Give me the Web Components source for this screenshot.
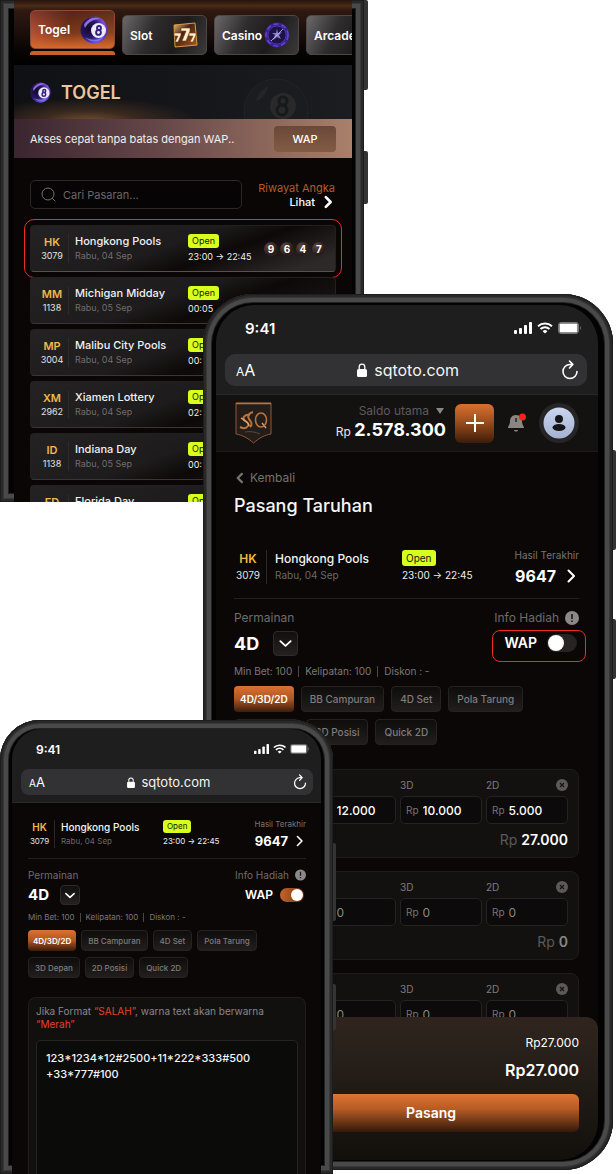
<!DOCTYPE html>
<html lang="id">
<head>
<meta charset="utf-8">
<meta name="viewport" content="width=device-width, initial-scale=1">
<title>SQTOTO - WAP</title>
<style>
  body { margin: 0; background: #fff; font-family: Inter, "Liberation Sans", sans-serif; }
</style>
</head>
<body>
<showcase-page></showcase-page>

<script>
// ---------- helpers ----------
function define(name, css, html) {
  customElements.define(name, class extends HTMLElement {
    constructor() {
      super();
      this.attachShadow({ mode: "open" });
    }
    connectedCallback() {
      const body = typeof html === "function" ? html(this) : html;
      this.shadowRoot.innerHTML = `
        <style>
          * { box-sizing: border-box; }
          button, input, select, textarea { font: inherit; color: inherit; margin: 0; }
          button { cursor: pointer; }
          svg { display: block; flex: none; }
          ${css}
        </style>
        ${body}`;
    }
  });
}

const attr = (el, name) => el.getAttribute(name) || "";

// ---------- icons ----------
const ball = size => `
  <svg width="${size}" height="${size}" viewBox="0 0 28 28" aria-hidden="true">
    <defs>
      <radialGradient id="b" cx=".3" cy=".45" r=".75">
        <stop offset="0" stop-color="#120a2c"/><stop offset=".45" stop-color="#2a1767"/>
        <stop offset=".8" stop-color="#7a52e0"/><stop offset="1" stop-color="#3c1f9c"/>
      </radialGradient>
    </defs>
    <circle cx="14" cy="14" r="13.500" fill="url(#b)"/>
    <path d="M4 9C7 3 14 0 20 3 14 3 8 6 5 12z" fill="#b58cff" opacity=".75"/>
    <path d="M5 21c5 6 14 6 18 0-4 3-12 4-18 0z" fill="#6d86ff" opacity=".8"/>
    <circle cx="18.500" cy="14.500" r="7.500" fill="#eeeaf8"/>
    <g fill="none" stroke="#33207c" stroke-width="1.900"><circle cx="19" cy="12" r="2"/><circle cx="18.500" cy="16.500" r="2.400"/></g>
  </svg>`;

const slots = `
  <svg width="26" height="26" viewBox="0 0 26 26" aria-hidden="true">
    <defs><linearGradient id="s" x2="1" y2="1"><stop offset="0" stop-color="#e9b976"/><stop offset=".4" stop-color="#4a2413"/><stop offset="1" stop-color="#a9591c"/></linearGradient></defs>
    <path d="M2 3 23 1 25 23 3 25z" fill="url(#s)" stroke="#d99a45"/>
    <g fill="#fff0d2" stroke="#7a3a10" stroke-width=".6">
      <path d="M2 11h7v2l-3 7H3l3-6H2zM17 11h7v2l-3 7h-3l3-6h-4z"/>
      <path d="M9 6h9v3l-4 10h-4l4-10H9z"/>
    </g>
  </svg>`;

const chip = `
  <svg width="26" height="26" viewBox="0 0 26 26" aria-hidden="true">
    <circle cx="13" cy="13" r="12.500" fill="#3a2190"/>
    <circle cx="13" cy="13" r="11" fill="none" stroke="#6246c8" stroke-width="1.500" stroke-dasharray="5 3"/>
    <circle cx="13" cy="13" r="9" fill="#1c1445" stroke="#4c34ac"/>
    <path d="M13 7l1 4 4-1-3 3 2 4-4-2-4 3 2-5-3-2h4z" fill="#8e7ccd"/>
    <path d="M7 19 19 7" stroke="#c7bdf3" stroke-width=".8"/>
  </svg>`;

const chevron = (size, d, w = 2) => `
  <svg width="${size}" height="${size}" viewBox="0 0 16 16" fill="none" stroke="currentColor" stroke-width="${w}" stroke-linecap="round" stroke-linejoin="round" aria-hidden="true"><path d="${d}"/></svg>`;
const RIGHT = "M5.500 2.500 11 8l-5.500 5.500";
const LEFT = "M10.500 2.500 5 8l5.500 5.500";
const DOWN = "M2.500 5.500 8 10.500l5.500-5";

const TABS = { togel: ball(28), slot: slots, casino: chip };

// ---------- device ----------
define("phone-frame", `
  :host { display: block; position: relative; min-width: 0; min-height: 0; }
  .case {
    height: 100%; display: flex; padding: var(--case-pad, 11px 15px 10px 13px);
    border-radius: var(--case-radius, 50px); background: #030303;
    box-shadow: inset 0 0 0 1px #1d1d1d, inset 0 0 0 3px #292929, inset 0 0 0 4px #393838,
      inset 0 0 0 8px #4a4949, inset 0 0 0 9px #222;
  }
  .screen {
    flex: 1; min-width: 0; display: flex; flex-direction: column; overflow: hidden;
    border-radius: var(--screen-radius, 38px); background: #0b0706; color: #fff;
  }
  .key { position: absolute; left: 100%; width: var(--key-width, 3px); background: #343434; border-radius: 0 2px 2px 0; }
  .one { top: var(--key-one); height: var(--key-one-size); }
  .two { top: var(--key-two); height: var(--key-two-size); }
`, `
  <span class="key one"></span><span class="key two"></span>
  <div class="case"><div class="screen"><slot></slot></div></div>
`);

define("browser-chrome", `
  :host { display: block; flex: none; background: #1f1e1f; border-bottom: 1px solid #2a2829; padding: 13px 11px 8px 9px; }
  .status { display: flex; align-items: center; justify-content: space-between; height: 20px; padding: 0 6px 0 20px; font-size: 15px; font-weight: 600; }
  .signals { display: flex; align-items: center; gap: 5px; }
  .address { display: flex; align-items: center; gap: 8px; height: 32px; margin-top: 16px; padding: 0 8px 0 11px; border-radius: 10px; background: #323133; font-size: 16px; }
  .aa { font-size: 16px; } .aa small { font-size: 12px; }
  .url { flex: 1; display: flex; align-items: center; justify-content: center; gap: 7px; color: #f4f4f4; }
  button { border: 0; padding: 0; background: none; color: #fff; }
  .reload svg { width: 18px; height: 20px; }
  :host([compact]) { padding: 12px 8px 7px 9px; }
  :host([compact]) .status { height: 16px; font-size: 12px; padding: 0 4px 0 15px; }
  :host([compact]) .signals { gap: 4px; }
  :host([compact]) .signals svg { height: 10px; width: auto; }
  :host([compact]) .address { height: 26px; margin-top: 12px; padding: 0 6px 0 8px; font-size: 13px; border-radius: 8px; }
  :host([compact]) .aa { font-size: 13px; } :host([compact]) .aa small { font-size: 10px; }
  :host([compact]) .url { gap: 6px; }
  :host([compact]) .lock { width: 8px; height: 11px; }
  :host([compact]) .reload svg { width: 14px; height: 16px; }
`, `
  <div class="status">
    <span>9:41</span>
    <span class="signals">
      <svg width="18" height="12" viewBox="0 0 18 12" fill="#fff"><rect y="8" width="3" height="4" rx="1"/><rect x="5" y="6" width="3" height="6" rx="1"/><rect x="10" y="3" width="3" height="9" rx="1"/><rect x="15" width="3" height="12" rx="1"/></svg>
      <svg width="16" height="12" viewBox="0 0 16 12" fill="none" stroke="#fff" stroke-width="2"><path d="M1 4.200a10.300 10.300 0 0 1 14 0M3.500 7a6.600 6.600 0 0 1 9 0"/><path d="M8 11.500 5.600 9.200a3.500 3.500 0 0 1 4.800 0z" fill="#fff" stroke="none"/></svg>
      <svg width="23" height="12" viewBox="0 0 23 12"><rect x=".5" y=".5" width="20" height="11" rx="2.500" fill="none" stroke="#777"/><rect x="1.500" y="1.500" width="18" height="9" rx="1" fill="#fff"/><path d="M22 4v4c1-.4 1-3.600 0-4z" fill="#888"/></svg>
    </span>
  </div>
  <div class="address">
    <button class="aa" type="button"><small>A</small>A</button>
    <span class="url">
      <svg class="lock" width="10" height="14" viewBox="0 0 10 14"><rect y="6" width="10" height="8" rx="1.500" fill="#fff"/><path d="M2.200 6V4a2.800 2.800 0 0 1 5.600 0v2" fill="none" stroke="#fff" stroke-width="1.300"/></svg>
      sqtoto.com
    </span>
    <button class="reload" type="button" aria-label="Muat ulang"><svg viewBox="0 0 18 20" fill="none" stroke="#fff" stroke-width="1.600" stroke-linecap="round" stroke-linejoin="round"><path d="M9 4.500a7 7 0 1 0 7 7M9 4.500h2.500M8.500 1l3.300 3.400L8.500 8"/></svg></button>
  </div>
`);

// ---------- market list ----------
define("category-tab", `
  :host { display: block; flex: none; width: 85px; color: #fff; }
  button {
    width: 100%; height: 40px; display: flex; align-items: center; justify-content: space-between;
    padding: 0 8px 0 7px; border: 1px solid #4b4747; border-radius: 5px;
    font-size: 12px; font-weight: 600; background: linear-gradient(115deg, #6a6868 0, #2e2c2c 35%, #1d1b1b 65%, #3c3a39 100%);
  }
  :host([active]) button {
    height: 39px; border-color: #8c4d33; padding: 0 6px 0 7px;
    background: linear-gradient(180deg, rgba(89,38,24,.5) 0, rgba(214,102,42,.3) 60%, #d8692b 100%), linear-gradient(100deg, #b04a3c, #532213 45%, #6d3a1d);
  }
  :host([active])::after { content: ""; display: block; height: 4px; margin-top: 2px; background: #c8602a; border-radius: 3px 3px 0 0; }
`, el => `<button type="button"><slot></slot>${TABS[attr(el, "icon")] || ""}</button>`);

define("market-row", `
  :host {
    display: flex; align-items: center; height: 47px; padding: 0 9px 0 7px; border-radius: 4px;
    border: 1px solid #232020; border-bottom-color: #3a3636;
    background: linear-gradient(160deg, #252224 0, #1d1b1c 45%, #0d0908 62%, #1c1a1a 100%);
  }
  :host([picked]) { outline: 1px solid #f02b22; outline-offset: 5px; background: linear-gradient(160deg, #252224 0, #1d1b1c 45%, #0d0908 62%, #2c2928 90%); border-bottom-color: #57504e; }
  .code { width: 28px; text-align: center; font-size: 9px; line-height: 14px; color: #e3e3e3; }
  .code b { display: block; font-size: 11px; font-weight: 600; color: #efb94d; }
  .name { width: 113px; margin-left: 2px; padding-left: 6px; border-left: 1px solid #2c2a2a; font-size: 9px; line-height: 14px; color: #6f6d6d; }
  .name b { display: block; font-size: 11px; line-height: 15px; font-weight: 500; color: #f1f1f1; }
  .when { flex: 1; white-space: nowrap; font-size: 9px; line-height: 14px; color: #eee; margin-left: 7px; }
  .badge { display: table; padding: 0 4px; margin-bottom: 2px; border-radius: 3px; background: #d8ff1e; color: #16180a; }
  .balls { display: flex; gap: 2px; }
  .balls i { width: 14px; height: 14px; border-radius: 50%; text-align: center; font: 700 10px/14px Inter, sans-serif; background: radial-gradient(circle at 30% 30%, #5d4541, #241b1a 65%, #463532); }
`, el => `
  <div class="code"><b>${attr(el, "code")}</b>${attr(el, "no")}</div>
  <div class="name"><b>${attr(el, "name")}</b>${attr(el, "date")}</div>
  <div class="when"><span class="badge">Open</span>${attr(el, "time")}</div>
  <div class="balls">${[...attr(el, "result")].map(n => `<i>${n}</i>`).join("")}</div>
`);

define("market-screen", `
  :host { display: flex; flex-direction: column; flex: 1; min-height: 0; background: #0a0605; }
  nav { display: flex; flex: none; align-items: flex-end; gap: 7px; height: 65px; padding: 0 0 10px 16px; overflow: hidden; background: linear-gradient(180deg, #24140c 0, #4c2a16 6px, #301a11 10px, #1f110c 28px, #070403 52px, #000 100%); }
  .banner { position: relative; display: flex; flex: none; align-items: center; gap: 10px; height: 54px; padding: 0 16px; overflow: hidden;
    background: radial-gradient(ellipse 110px 24px at 22% 105%, #76502f 0, #3a291f 45%, transparent 100%), linear-gradient(90deg, #101114, #15161a 50%, #1c1d21); }
  h1 { margin: 0; font-size: 18px; font-weight: 600; color: #edc79a; }
  .ghost { position: absolute; right: 42px; top: 12px; }
  .promo { display: flex; flex: none; align-items: center; justify-content: space-between; height: 39px; padding: 0 16px; font-size: 11px; color: #f4eeee; background: linear-gradient(90deg, #3a2530 0, #68494a 45%, #a98069 100%); }
  .promo button { width: 62px; height: 26px; border: 0; border-radius: 4px; background: linear-gradient(180deg, #6a4839, #835b43); font-size: 11px; font-weight: 500; color: #fff; }
  .tools { display: flex; flex: none; align-items: center; gap: 16px; padding: 22px 17px 16px 16px; }
  .search { flex: 1; min-width: 0; display: flex; align-items: center; gap: 7px; height: 29px; padding: 0 10px; border: 1px solid #2b2828; border-radius: 5px; background: #060404; color: #77716f; }
  input { flex: 1; min-width: 0; padding: 0; border: 0; outline: 0; background: none; font-size: 11px; }
  input::placeholder { color: #6b6766; opacity: 1; }
  .history { text-align: right; font-size: 11px; line-height: 14px; color: #b05d2c; white-space: nowrap; }
  .history a { display: flex; align-items: center; justify-content: flex-end; gap: 6px; color: #fff; text-decoration: none; font-weight: 500; }
  .list { flex: 1; min-height: 0; overflow: visible; display: flex; flex-direction: column; gap: 5px; padding: 0 16px; }
  market-row { flex: none; }
`, `
  <nav>
    <category-tab icon="togel" active>Togel</category-tab>
    <category-tab icon="slot">Slot</category-tab>
    <category-tab icon="casino">Casino</category-tab>
    <category-tab>Arcade</category-tab>
  </nav>
  <header class="banner">
    ${ball(21)}
    <h1>TOGEL</h1>
    <svg class="ghost" width="68" height="68" viewBox="0 0 68 68" aria-hidden="true">
      <circle cx="34" cy="34" r="32" fill="#1b1c1f" stroke="#222326"/>
      <path d="M14 24c2-7 6-12 12-15-1 7-5 13-12 15z" fill="#242528"/>
      <circle cx="41" cy="29" r="13" fill="#29292b"/>
      <g fill="none" stroke="#18191b" stroke-width="3"><circle cx="41" cy="24" r="4"/><circle cx="40" cy="33" r="5"/></g>
    </svg>
  </header>
  <div class="promo"><span>Akses cepat tanpa batas dengan WAP..</span><button type="button">WAP</button></div>
  <div class="tools">
    <label class="search">
      <svg width="15" height="15" viewBox="0 0 15 15" fill="none" stroke="currentColor"><circle cx="7" cy="7" r="6"/><path d="m11.500 11.500 2.500 2.500" stroke-linecap="round"/></svg>
      <input type="search" placeholder="Cari Pasaran..." aria-label="Cari Pasaran">
    </label>
    <div class="history">Riwayat Angka<a href="#riwayat">Lihat ${chevron(14, RIGHT, 3)}</a></div>
  </div>
  <div class="list">
    <market-row picked code="HK" no="3079" name="Hongkong Pools" date="Rabu, 04 Sep" time="23:00 → 22:45" result="9647"></market-row>
    <market-row code="MM" no="1138" name="Michigan Midday" date="Rabu, 05 Sep" time="00:05"></market-row>
    <market-row code="MP" no="3004" name="Malibu City Pools" date="Rabu, 04 Sep" time="00:"></market-row>
    <market-row code="XM" no="2962" name="Xiamen Lottery" date="Rabu, 04 Sep" time="02:"></market-row>
    <market-row code="ID" no="1138" name="Indiana Day" date="Rabu, 05 Sep" time="00:"></market-row>
    <market-row code="FD" no="&nbsp;" name="Florida Day" date="&nbsp;" time="&nbsp;"></market-row>
  </div>
`);

// ---------- bet pages ----------
define("account-bar", `
  :host { display: flex; flex: none; align-items: center; height: 57px; padding: 0 19px; background: #141211; border-bottom: 1px solid #1d1a19; }
  .saldo { flex: 1; display: flex; flex-direction: column; align-items: flex-end; margin-right: 9px; white-space: nowrap; }
  .top { display: flex; align-items: center; gap: 7px; padding-right: 2px; font-size: 12px; line-height: 16px; color: #5c5a5a; }
  .sum { font-size: 12px; line-height: 22px; color: #e8e8e8; }
  .sum b { font-size: 18px; font-weight: 700; color: #fff; }
  .plus { display: grid; place-items: center; width: 39px; height: 39px; padding: 0; border: 0; border-radius: 6px; background: linear-gradient(180deg, #db6f30, #a4521f 40%, #3d1c0b); }
  .bell, .user { border: 0; padding: 0; background: none; }
  .bell { margin: 0 13px 0 14px; }
`, `
  <svg width="37" height="42" viewBox="0 0 37 42" aria-hidden="true">
    <path d="M1 1h35v31c-6 1-12 4-17.500 9C13 36 7 33 1 32z" fill="#241d19" stroke="#8f5837"/>
    <path d="M1 1.500h35" stroke="#c2703a" stroke-width="1.500"/>
    <path d="M15 13c-4-1-8 2-6 5 2 2 6 3 4 6-2 3-6 2-8 1M18 10c-4 1-6 4-4 7s4 5 1 8" fill="none" stroke="#b5733f" stroke-width="2"/>
    <path d="M6 16c3 2 8 4 8 8M31 26l-4-5" fill="none" stroke="#e0a672" stroke-width="1.300"/>
    <ellipse cx="26" cy="18" rx="5.500" ry="7" fill="none" stroke="#b5733f" stroke-width="1.600"/>
    <path d="M10 30c5-1 11 0 15 2" stroke="#5c493c" fill="none"/>
  </svg>
  <div class="saldo">
    <span class="top">Saldo utama <svg width="8" height="6" viewBox="0 0 8 6" fill="#8a8786"><path d="M0 0h8L4 6z"/></svg></span>
    <span class="sum">Rp <b>2.578.300</b></span>
  </div>
  <button class="plus" type="button" aria-label="Deposit"><svg width="18" height="18" viewBox="0 0 18 18" stroke="#fff" stroke-width="2"><path d="M9 0v18M0 9h18"/></svg></button>
  <button class="bell" type="button" aria-label="Notifikasi">
    <svg width="18" height="20" viewBox="0 0 18 20"><path d="M8 2c4 0 6 3 6 6 0 4 2 5 2 7H0c0-2 2-3 2-7 0-3 2-6 6-6z" fill="#8a8782"/><path d="M6 17h4c0 2-4 2-4 0z" fill="#8a8782"/><path d="M8 5v4" stroke="#222" stroke-width="1.500"/><circle cx="14.500" cy="4" r="3.500" fill="#f3231c"/></svg>
  </button>
  <button class="user" type="button" aria-label="Akun">
    <svg width="40" height="40" viewBox="0 0 40 40"><defs><linearGradient id="u" x2="0" y2="1"><stop offset="0" stop-color="#cbd6ee"/><stop offset="1" stop-color="#a3b2d1"/></linearGradient></defs><circle cx="20" cy="20" r="20" fill="#262425"/><circle cx="20" cy="20" r="15.500" fill="url(#u)"/><circle cx="20" cy="16" r="4" fill="#15161b"/><ellipse cx="20" cy="24.500" rx="6.500" ry="3.500" fill="#15161b"/></svg>
  </button>
`);

define("bet-header", `
  :host {
    --small: 10px; --mid: 12px; --big: 18px; --line: 17px; --box: 25px;
    display: block; flex: none;
  }
  :host([compact]) { --small: 8px; --mid: 10px; --big: 15px; --line: 14px; --box: 20px; }
  .pool { display: flex; align-items: center; padding-bottom: 12px; border-bottom: 1px solid #231f1e; font-size: var(--small); line-height: var(--line); white-space: nowrap; }
  .code { width: 28px; text-align: center; color: #e3e3e3; }
  .code b { display: block; font-size: var(--mid); font-weight: 600; color: #efb94d; }
  .name { width: 136px; margin-left: 4px; padding-left: 8px; border-left: 1px solid #2a2726; color: #6a6766; }
  .name b { display: block; font-size: var(--mid); font-weight: 500; color: #f4f4f4; }
  .when { flex: 1; color: #eee; }
  .badge { display: table; padding: 0 4px; border-radius: 3px; background: #d8ff1e; color: #16180a; line-height: 16px; margin-bottom: 1px; }
  .last { text-align: right; line-height: 14px; color: #777473; }
  .last a { display: flex; align-items: center; justify-content: flex-end; gap: 7px; margin-top: 4px; font-size: 16px; font-weight: 700; line-height: 20px; color: #fff; text-decoration: none; }
  .game { display: flex; justify-content: space-between; padding-top: 11px; font-size: var(--mid); line-height: 16px; color: #6f6c6b; }
  .left { display: grid; justify-items: start; align-content: start; gap: 5px; }
  .pick { display: grid; align-items: center; color: #fff; }
  .pick > * { grid-area: 1 / 1; }
  select { appearance: none; height: var(--box); padding: 0 38px 0 0; border: 0; background: none; font-size: var(--big); font-weight: 700; }
  .arrow { justify-self: end; pointer-events: none; display: grid; place-items: center; width: var(--box); height: var(--box); border: 1px solid #2e2a29; border-radius: 4px; background: linear-gradient(#12100f, #242120); }
  .right { display: grid; justify-items: end; align-content: start; gap: 4px; }
  .info { display: flex; align-items: center; gap: 6px; }
  .wap { display: flex; align-items: center; gap: 10px; height: 32px; margin-right: -7px; padding: 0 8px 6px 11px; border: 1px solid #f02b22; border-radius: 8px; color: #fff; font-size: 14px; font-weight: 600; }
  .wap input { appearance: none; display: flex; width: 30px; height: 18px; border-radius: 9px; background: #262322; }
  .wap input::before { content: ""; width: 16px; height: 16px; margin: 1px; border-radius: 50%; background: #fff; }
  .wap input:checked { justify-content: flex-end; background: linear-gradient(90deg, #c96329, #6e3414); }
  .terms { display: flex; gap: 6px; margin-top: 2px; font-size: var(--small); line-height: 14px; color: #7b7877; white-space: nowrap; }
  .terms span + span { border-left: 1px solid #4b4847; padding-left: 6px; height: 11px; line-height: 11px; align-self: center; }
  .chips { display: flex; flex-wrap: wrap; gap: 7px; margin-top: 8px; }
  .chips button { height: 26px; padding: 0 8px; border: 1px solid #252221; border-radius: 4px; background: linear-gradient(#0f0d0c, #211e1d); font-size: var(--small); font-weight: 500; color: #7f7c7b; white-space: nowrap; }
  .chips .on { padding: 0 5px; color: #fff; font-weight: 600; border-color: transparent; background: linear-gradient(#dc7133, #ac5622 50%, #3c1c0b) border-box; }

  :host([compact]) .pool { padding-bottom: 9px; }
  :host([compact]) .code { width: 23px; }
  :host([compact]) .name { width: 109px; margin-left: 3px; padding-left: 6px; }
  :host([compact]) .badge { line-height: 13px; }
  :host([compact]) .last { line-height: 12px; }
  :host([compact]) .last a { font-size: 13px; line-height: 16px; gap: 5px; margin-top: 3px; }
  :host([compact]) .last svg { width: 13px; }
  :host([compact]) .game { padding-top: 9px; line-height: 14px; }
  :host([compact]) .left { gap: 3px; }
  :host([compact]) .right { gap: 3px; }
  :host([compact]) .info svg { width: 11px; }
  :host([compact]) select { padding-right: 31px; }
  :host([compact]) .arrow svg { width: 12px; }
  :host([compact]) .wap { height: 20px; margin: 0; padding: 0 2px; border: 0; gap: 7px; font-size: 12px; }
  :host([compact]) .wap input { width: 24px; height: 14px; }
  :host([compact]) .wap input::before { width: 12px; height: 12px; }
  :host([compact]) .terms { margin-top: 6px; line-height: 12px; gap: 5px; }
  :host([compact]) .terms span + span { padding-left: 5px; height: 9px; line-height: 9px; }
  :host([compact]) .chips { gap: 6px 5px; margin-top: 7px; }
  :host([compact]) .chips button { height: 21px; padding: 0 6px; }
  :host([compact]) .chips .on { padding: 0 4px; }
`, el => `
  <div class="pool">
    <div class="code"><b>HK</b>3079</div>
    <div class="name"><b>Hongkong Pools</b>Rabu, 04 Sep</div>
    <div class="when"><span class="badge">Open</span>23:00 → 22:45</div>
    <div class="last">Hasil Terakhir<a href="#hasil">9647 ${chevron(16, RIGHT)}</a></div>
  </div>
  <div class="game">
    <div class="left">
      <label for="game">Permainan</label>
      <div class="pick">
        <select id="game"><option>4D</option><option>3D</option><option>2D</option></select>
        <span class="arrow">${chevron(15, DOWN)}</span>
      </div>
    </div>
    <div class="right">
      <span class="info">Info Hadiah <svg width="14" height="14" viewBox="0 0 14 14"><circle cx="7" cy="7" r="7" fill="#8b8887"/><path d="M7 3v5M7 9.500v1.500" stroke="#1a1716" stroke-width="1.600"/></svg></span>
      <label class="wap">WAP <input type="checkbox" role="switch" ${el.hasAttribute("wap") ? "checked" : ""}></label>
    </div>
  </div>
  <div class="terms"><span>Min Bet: 100</span><span>Kelipatan: 100</span><span>Diskon : -</span></div>
  <div class="chips">
    ${["4D/3D/2D", "BB Campuran", "4D Set", "Pola Tarung", "3D Depan", "2D Posisi", "Quick 2D"]
      .map((t, i) => `<button type="button"${i ? "" : ' class="on"'}>${t}</button>`).join("")}
  </div>
`);

define("bet-card", `
  :host { display: block; flex: none; padding: 8px 10px 7px; border: 1px solid #1e1c1b; border-radius: 8px; background: #131110; color: #8a8786; }
  .fields { display: grid; grid-template-columns: 65px 1fr 1fr 1fr; gap: 4px; align-items: end; }
  .head { display: flex; justify-content: space-between; align-items: center; height: 14px; margin-bottom: 4px; font-size: 10px; color: #7f7c7b; }
  .head button { border: 0; padding: 0; background: none; }
  .box { display: flex; align-items: center; gap: 4px; height: 28px; padding: 0 5px; border: 1px solid #252222; border-radius: 5px; background: #0c0a0a; font-size: 10px; color: #777473; }
  input { flex: 1; width: 0; min-width: 0; padding: 0; border: 0; outline: 0; background: none; font-size: 12px; color: #8a8786; }
  .total { margin-top: 6px; text-align: right; font-size: 14px; line-height: 20px; color: #5c5958; }
  .total b { font-weight: 600; color: #8a8786; }
  :host([filled]) .box input { color: #fff; font-weight: 500; }
  :host([filled]) .total b { color: #fff; }
`, el => {
  const values = attr(el, "values").split(" ");
  const total = attr(el, "total");
  const field = (label, i) => `
    <div>
      <div class="head"><label for="f${i}">${label}</label>${i === 2 ? `
        <button type="button" aria-label="Hapus"><svg width="12" height="12" viewBox="0 0 12 12"><circle cx="6" cy="6" r="6" fill="#5c5958"/><path d="m4 4 4 4M8 4 4 8" stroke="#171413" stroke-width="1.200"/></svg></button>` : ""}</div>
      <div class="box">Rp <input id="f${i}" value="${values[i]}" inputmode="numeric"></div>
    </div>`;
  return `
    <div class="fields">
      <div class="box"><input aria-label="Nomor"></div>
      ${["4D", "3D", "2D"].map(field).join("")}
    </div>
    ${total && `<div class="total">Rp <b>${total}</b></div>`}`;
});

define("bet-screen", `
  :host { display: flex; flex-direction: column; flex: 1; min-height: 0; }
  main { flex: 1 1 0; min-height: 0; overflow: hidden; display: flex; flex-direction: column; padding: 18px 19px 0 18px; }
  .back { display: flex; align-items: center; gap: 4px; font-size: 12px; line-height: 16px; color: #757271; text-decoration: none; }
  h2 { margin: 8px 0 30px; font-size: 18px; line-height: 24px; font-weight: 500; color: #f6f6f6; }
  .cards { display: flex; flex-direction: column; gap: 13px; margin-top: 24px; }
  footer { flex: none; padding: 18px 19px 28px 18px; border-radius: 12px 12px 0 0; background: linear-gradient(#30251e, #211b16 50%, #12100b); text-align: right; font-size: 12px; line-height: 16px; }
  footer strong { display: block; margin: 8px 0 13px; font-size: 16px; line-height: 22px; font-weight: 600; }
  .actions { display: flex; padding-left: 49px; }
  .actions button { flex: 1; height: 38px; border: 0; border-radius: 6px; background: linear-gradient(#df7433, #b45b25 40%, #34190b); font-size: 14px; font-weight: 600; }
`, `
  <browser-chrome></browser-chrome>
  <account-bar></account-bar>
  <main>
    <a class="back" href="#kembali">${chevron(12, LEFT, 3)}Kembali</a>
    <h2>Pasang Taruhan</h2>
    <bet-header></bet-header>
    <div class="cards">
      <bet-card filled values="12.000 10.000 5.000" total="27.000"></bet-card>
      <bet-card values="0 0 0" total="0"></bet-card>
      <bet-card values="0 0 0"></bet-card>
    </div>
  </main>
  <footer>
    Rp27.000
    <strong>Rp27.000</strong>
    <div class="actions"><button type="button">Pasang</button></div>
  </footer>
`);

define("wap-screen", `
  :host { display: flex; flex-direction: column; flex: 1; min-height: 0; }
  main { flex: 1; min-height: 0; display: flex; flex-direction: column; padding: 15px 15px 0 16px; }
  .note { flex: 1; min-height: 0; display: flex; flex-direction: column; margin-top: 19px; padding: 7px 7px 0; border: 1px solid #201d1c; border-bottom: 0; border-radius: 8px 8px 0 0; background: #11100f; }
  label { font-size: 10px; line-height: 13px; color: #8a8786; }
  em { font-style: normal; color: #e5402f; }
  textarea { flex: 1; margin-top: 9px; padding: 9px; resize: none; border: 1px solid #262322; border-bottom: 0; border-radius: 5px 5px 0 0; outline: 0; overflow: hidden; background: #0b0b0a; color: #f4f4f4; font-size: 11px; line-height: 16px; font-weight: 500; }
`, `
  <browser-chrome compact></browser-chrome>
  <main>
    <bet-header compact wap></bet-header>
    <div class="note">
      <label for="bets">Jika Format <em>“SALAH”</em>, warna text akan berwarna <em>“Merah”</em></label>
      <textarea id="bets" spellcheck="false">123*1234*12#2500+11*222*333#500
+33*777#100</textarea>
    </div>
  </main>
`);

// Three devices share overlapping grid tracks, later ones lie on top.
define("showcase-page", `
  :host { display: grid; min-height: 100vh; overflow: hidden; grid-template-columns: 203fr 130fr 31fr 249fr 3px; grid-template-rows: 294px 208px 218px minmax(454px, 1fr); }
  .list {
    grid-area: 1 / 1 / 3 / 4; clip-path: inset(0 -8px 0 0);
    --case-radius: 0; --screen-radius: 0; --case-pad: 0 12px 0 14px;
    --key-width: 4px; --key-one: 0px; --key-one-size: 90px; --key-two: 151px; --key-two-size: 53px;
  }
  .bet {
    grid-area: 2 / 2 / 5 / 5; margin-bottom: 4px;
    --key-one: 156px; --key-one-size: 100px; --key-two: 325px; --key-two-size: 60px;
  }
  .wap {
    grid-area: 4 / 1 / 5 / 3;
    --case-radius: 40px 40px 0 0; --screen-radius: 30px 30px 0 0; --case-pad: 9px 12px 0 12px;
    --key-one: 123px; --key-one-size: 78px; --key-two: 264px; --key-two-size: 46px;
  }
`, `
  <phone-frame class="list"><market-screen></market-screen></phone-frame>
  <phone-frame class="bet"><bet-screen></bet-screen></phone-frame>
  <phone-frame class="wap"><wap-screen></wap-screen></phone-frame>
`);
</script>
</body>
</html>
